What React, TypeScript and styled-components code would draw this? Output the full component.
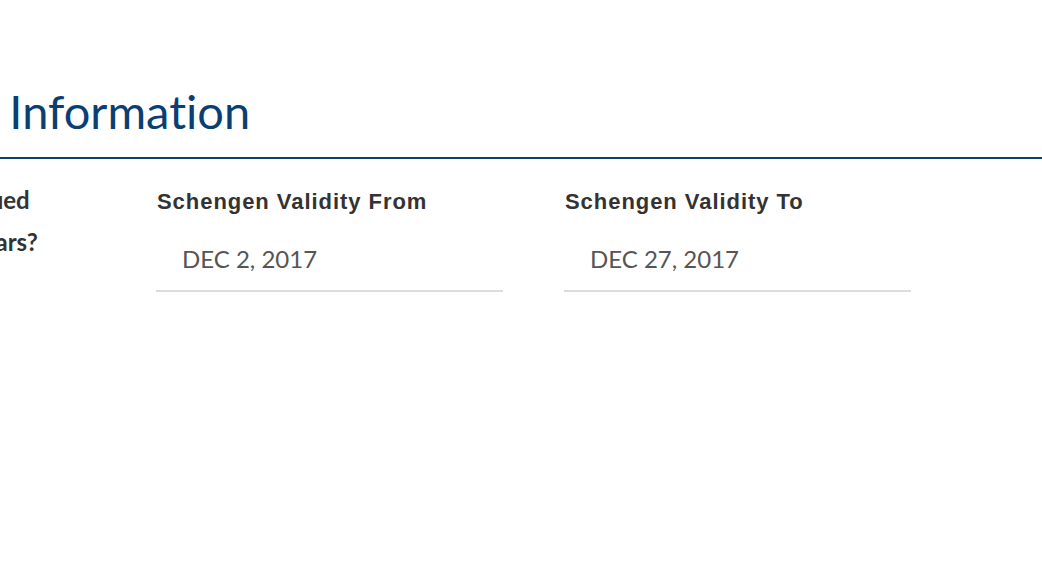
import React from "react";
import { styled, createGlobalStyle } from "styled-components";

const GlobalStyle = createGlobalStyle`
  html, body {
    margin: 0;
    padding: 0;
    background: #ffffff;
  }
  body {
    width: 1042px;
    height: 583px;
    overflow: hidden;
  }
`;

type Field = {
  label: string[];
  value?: string;
  question?: boolean;
};

const fields: Field[] = [
  {
    label: ["Was A Schengen Visa Issued", "Within The Last Three Years?"],
    question: true,
  },
  { label: ["Schengen Validity From"], value: "DEC 2, 2017" },
  { label: ["Schengen Validity To"], value: "DEC 27, 2017" },
];

const App: React.FC = () => {
  return (
    <>
      <GlobalStyle />
      <Page>
        <SectionHeader>
          <Title>Schengen Visa Information</Title>
        </SectionHeader>
        <FieldGrid>
          {fields.map((f, i) => (
            <FieldColumn key={i}>
              <Label $question={f.question}>
                {f.label.map((line) => (
                  <LabelLine key={line}>{line}</LabelLine>
                ))}
              </Label>
              {f.value && (
                <DateInput>
                  <DateValue>{f.value}</DateValue>
                </DateInput>
              )}
            </FieldColumn>
          ))}
        </FieldGrid>
      </Page>
    </>
  );
};

export default App;

const Page = styled.div`
  margin-left: -252px;
  width: 1294px;
  padding-top: 82px;
`;

const SectionHeader = styled.div`
  border-bottom: 2px solid #0b3f73;
  height: 77px;
  box-sizing: border-box;
`;

const Title = styled.h2`
  margin: 0 0 0 -48px;
  font-family: Lato, "Open Sans", sans-serif;
  font-weight: 400;
  font-size: 47px;
  line-height: 58px;
  color: #0b3f73;
  font-variant-ligatures: none;
  white-space: nowrap;
`;

const FieldGrid = styled.div`
  display: grid;
  grid-template-columns: repeat(3, 347px);
  column-gap: 61px;
  padding-top: 22px;
`;

const FieldColumn = styled.div`
  display: flex;
  flex-direction: column;
`;

const Label = styled.div<{ $question?: boolean }>`
  font-family: ${(p) =>
    p.$question ? `Lato, "Open Sans", sans-serif` : `"Liberation Sans", Arial, sans-serif`};
  font-weight: 700;
  font-size: ${(p) => (p.$question ? "24px" : "22px")};
  line-height: ${(p) => (p.$question ? "42px" : "41px")};
  letter-spacing: ${(p) => (p.$question ? "0" : "0.95px")};
  color: #333333;
  padding-left: 1px;
  margin: ${(p) => (p.$question ? "-2px 0 0 -20px" : "0")};
  white-space: nowrap;
`;

const LabelLine = styled.div``;

const DateInput = styled.div`
  display: flex;
  align-items: center;
  height: 70px;
  padding: 5px 0 0 26px;
  border-bottom: 2px solid #dcdce0;
  box-sizing: border-box;
`;

const DateValue = styled.span`
  font-family: Lato, "Open Sans", sans-serif;
  font-size: 24px;
  color: #555555;
`;
